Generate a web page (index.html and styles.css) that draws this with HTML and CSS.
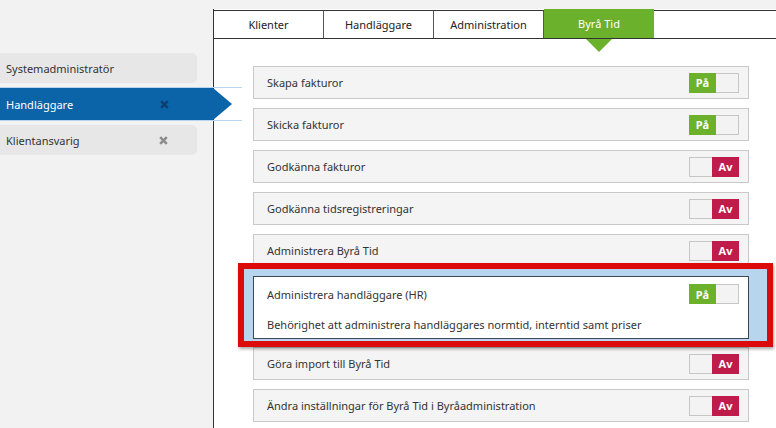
FILE: index.html
```html
<!DOCTYPE html>
<html lang="sv">
<head>
  <meta charset="UTF-8">
  <title>Behörigheter</title>
  <link rel="stylesheet" href="styles.css">
</head>
<body>
  <div class="layout">
    <div class="sidebar">
      <div class="role">Systemadministratör</div>
      <div class="role-active">
        <div class="role-bar">
          <span>Handläggare</span>
          <svg class="remove" width="9" height="9" viewBox="0 0 9 9"><path d="M1.2 1.2L7.8 7.8M7.8 1.2L1.2 7.8" /></svg>
        </div>
      </div>
      <div class="role">
        <span>Klientansvarig</span>
        <svg class="remove" width="9" height="9" viewBox="0 0 9 9"><path d="M1.2 1.2L7.8 7.8M7.8 1.2L1.2 7.8" /></svg>
      </div>
    </div>

    <div class="main">
      <div class="tabs">
        <div class="tab">Klienter</div>
        <div class="tab">Handläggare</div>
        <div class="tab">Administration</div>
        <div class="tab active">Byrå Tid</div>
      </div>

      <div class="rights">
        <div class="right">
          <span>Skapa fakturor</span>
          <span class="toggle on"><span class="knob">På</span><span class="blank"></span></span>
        </div>
        <div class="right">
          <span>Skicka fakturor</span>
          <span class="toggle on"><span class="knob">På</span><span class="blank"></span></span>
        </div>
        <div class="right">
          <span>Godkänna fakturor</span>
          <span class="toggle off"><span class="blank"></span><span class="knob">Av</span></span>
        </div>
        <div class="right">
          <span>Godkänna tidsregistreringar</span>
          <span class="toggle off"><span class="blank"></span><span class="knob">Av</span></span>
        </div>
        <div class="right">
          <span>Administrera Byrå Tid</span>
          <span class="toggle off"><span class="blank"></span><span class="knob">Av</span></span>
        </div>

        <div class="marked">
          <div class="right open">
            <div class="right-head">
              <span>Administrera handläggare (HR)</span>
              <span class="toggle on"><span class="knob">På</span><span class="blank"></span></span>
            </div>
            <div class="desc">Behörighet att administrera handläggares normtid, interntid samt priser</div>
          </div>
        </div>

        <div class="right">
          <span>Göra import till Byrå Tid</span>
          <span class="toggle off"><span class="blank"></span><span class="knob">Av</span></span>
        </div>
        <div class="right">
          <span>Ändra inställningar för Byrå Tid i Byråadministration</span>
          <span class="toggle off"><span class="blank"></span><span class="knob">Av</span></span>
        </div>
      </div>
    </div>
  </div>
</body>
</html>
```

FILE: styles.css
```css
body {
  margin: 0;
  overflow: hidden;
  font-family: "Noto Sans", sans-serif;
  font-size: 11px;
  color: #333;
  background: #f2f2f2;
}
.layout {
  display: flex;
  height: 428px;
}
.sidebar {
  width: 213px;
  flex-shrink: 0;
  padding-top: 53px;
}
.role {
  display: flex;
  align-items: center;
  justify-content: space-between;
  box-sizing: border-box;
  width: 197px;
  height: 30px;
  padding: 0 29px 0 6px;
  margin-bottom: 4px;
  background: #e7e7e7;
  border-radius: 0 5px 5px 0;
}
.role-active {
  position: relative;
  z-index: 2;
  width: 242px;
  margin-bottom: 4px;
  border-top: 1px solid #b7d5ee;
  border-bottom: 1px solid #b7d5ee;
}
.role-bar {
  display: flex;
  align-items: center;
  box-sizing: border-box;
  width: 232px;
  height: 32px;
  padding-left: 6px;
  color: #fff;
  background: #0b63a8;
  clip-path: polygon(0 0, 213px 0, 100% 50%, 213px 100%, 0 100%);
}
.role-bar span {
  width: 154px;
}
.remove path {
  stroke: #8c8c8c;
  stroke-width: 2.6;
}
.role-bar .remove path {
  stroke: #0d3f6e;
}
.main {
  flex: 1;
  margin-top: 9px;
  background: #fff;
  border-left: 1px solid #333;
}
.tabs {
  display: flex;
  height: 29px;
  margin-top: 1px;
  box-sizing: border-box;
  border-top: 1px solid #333;
  border-bottom: 1px solid #333;
}
.tab {
  display: flex;
  align-items: center;
  justify-content: center;
  box-sizing: border-box;
  width: 110px;
  border-right: 1px solid #555;
  color: #222;
}
.tab.active {
  position: relative;
  margin-top: -2px;
  border-right: none;
  color: #fff;
  background: #6cb12b;
}
.tab.active::after {
  content: "";
  position: absolute;
  left: 42px;
  top: 100%;
  border-left: 13px solid transparent;
  border-right: 13px solid transparent;
  border-top: 13px solid #6cb12b;
  margin-top: 1px;
}
.rights {
  width: 496px;
  margin: 27px 0 0 39px;
}
.right {
  display: flex;
  align-items: center;
  justify-content: space-between;
  box-sizing: border-box;
  height: 33px;
  padding: 0 9px 0 13px;
  margin-bottom: 9px;
  background: #f4f4f4;
  border: 1px solid #c9c9c9;
}
.toggle {
  display: flex;
  height: 20px;
  font-weight: bold;
  color: #fff;
}
.knob {
  display: flex;
  align-items: center;
  justify-content: center;
  width: 27px;
}
.toggle.on .knob {
  background: #6cb12b;
}
.toggle.off .knob {
  background: #bf1b4b;
}
.blank {
  box-sizing: border-box;
  width: 23px;
  background: #f3f3f3;
  border: 1px solid #c6c6c6;
}
.toggle.on .blank {
  border-left: none;
}
.toggle.off .blank {
  border-right: none;
}
.marked {
  position: relative;
}
.marked::before {
  content: "";
  position: absolute;
  z-index: 1;
  top: -13px;
  left: -15px;
  right: -24px;
  bottom: -8px;
  background: #b7d5ee;
  border: 6px solid #dc0a0a;
  box-shadow: 1px 2px 3px rgba(0, 0, 0, 0.35);
}
.right.open {
  position: relative;
  z-index: 2;
  display: block;
  height: 63px;
  margin-bottom: 8px;
  background: #fff;
  border-color: #3e4853;
}
.right-head {
  display: flex;
  align-items: center;
  justify-content: space-between;
  height: 34px;
}
.desc {
  margin-top: 6px;
  line-height: 16px;
}
```
